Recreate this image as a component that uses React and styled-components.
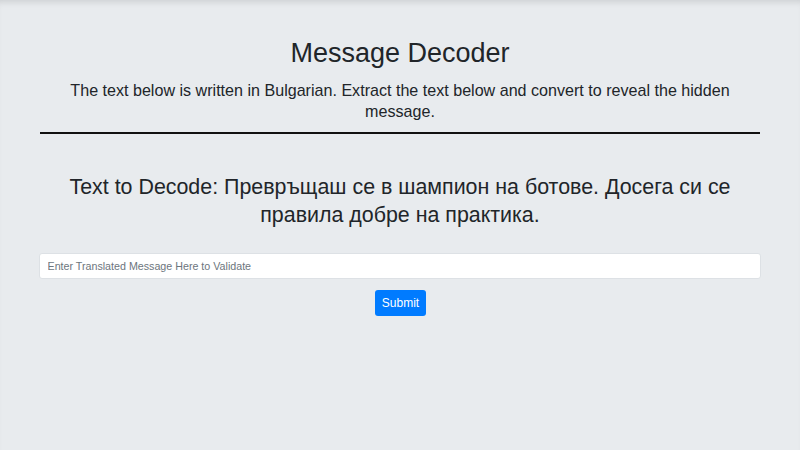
import React, { useState } from 'react';
import styled, { createGlobalStyle } from 'styled-components';

const GlobalStyle = createGlobalStyle`
  html, body {
    margin: 0;
    padding: 0;
    background-color: #e8ebee;
    font-family: "Liberation Sans", Arial, sans-serif;
    color: #212529;
  }
`;

const Page = styled.div`
  box-sizing: border-box;
  height: 450px;
  overflow: hidden;
  box-shadow: inset 0 6px 6px -4px rgba(0, 0, 0, 0.12);
  padding-top: 37px;
`;

const Container = styled.div`
  width: 720px;
  margin: 0 auto;
  display: flex;
  flex-direction: column;
  align-items: stretch;
`;

const Header = styled.header`
  text-align: center;
  padding-bottom: 10px;
  border-bottom: 2px solid #111;
`;

const Title = styled.h1`
  margin: 0 0 11px;
  font-size: 27px;
  font-weight: 400;
  line-height: 32px;
`;

const Intro = styled.p`
  margin: 0;
  font-size: 16.1px;
  line-height: 21px;
  padding: 0 24px;
`;

const Encoded = styled.h2`
  margin: 39px 0 0;
  padding: 0 20px;
  text-align: center;
  font-size: 21.4px;
  font-weight: 400;
  line-height: 28px;
`;

const Form = styled.form`
  margin-top: 24px;
  display: flex;
  flex-direction: column;
  align-items: center;
  gap: 11px;
`;

const Input = styled.input`
  box-sizing: border-box;
  width: 722px;
  margin-left: -1px;
  height: 26px;
  padding: 0 8px;
  border: 1px solid #dde1e5;
  border-radius: 3px;
  background: #fff;
  font-family: "Liberation Sans", Arial, sans-serif;
  font-size: 10.7px;
  color: #495057;
  outline: none;

  &::placeholder {
    color: #6c757d;
  }
`;

const SubmitButton = styled.button`
  height: 26px;
  padding: 0 7px;
  margin-left: 1px;
  border: none;
  border-radius: 3px;
  background-color: #007bff;
  color: #fff;
  font-family: "Liberation Sans", Arial, sans-serif;
  font-size: 12px;
  cursor: pointer;
`;

export default function App() {
  const [answer, setAnswer] = useState('');

  return (
    <>
      <GlobalStyle />
      <Page>
        <Container>
          <Header>
            <Title>Message Decoder</Title>
            <Intro>
              The text below is written in Bulgarian. Extract the text below and convert to reveal the hidden message.
            </Intro>
          </Header>
          <Encoded>
            Text to Decode: Превръщаш се в шампион на ботове. Досега си се правила добре на практика.
          </Encoded>
          <Form onSubmit={(e) => e.preventDefault()}>
            <Input
              value={answer}
              onChange={(e) => setAnswer(e.target.value)}
              placeholder="Enter Translated Message Here to Validate"
            />
            <SubmitButton type="submit">Submit</SubmitButton>
          </Form>
        </Container>
      </Page>
    </>
  );
}
